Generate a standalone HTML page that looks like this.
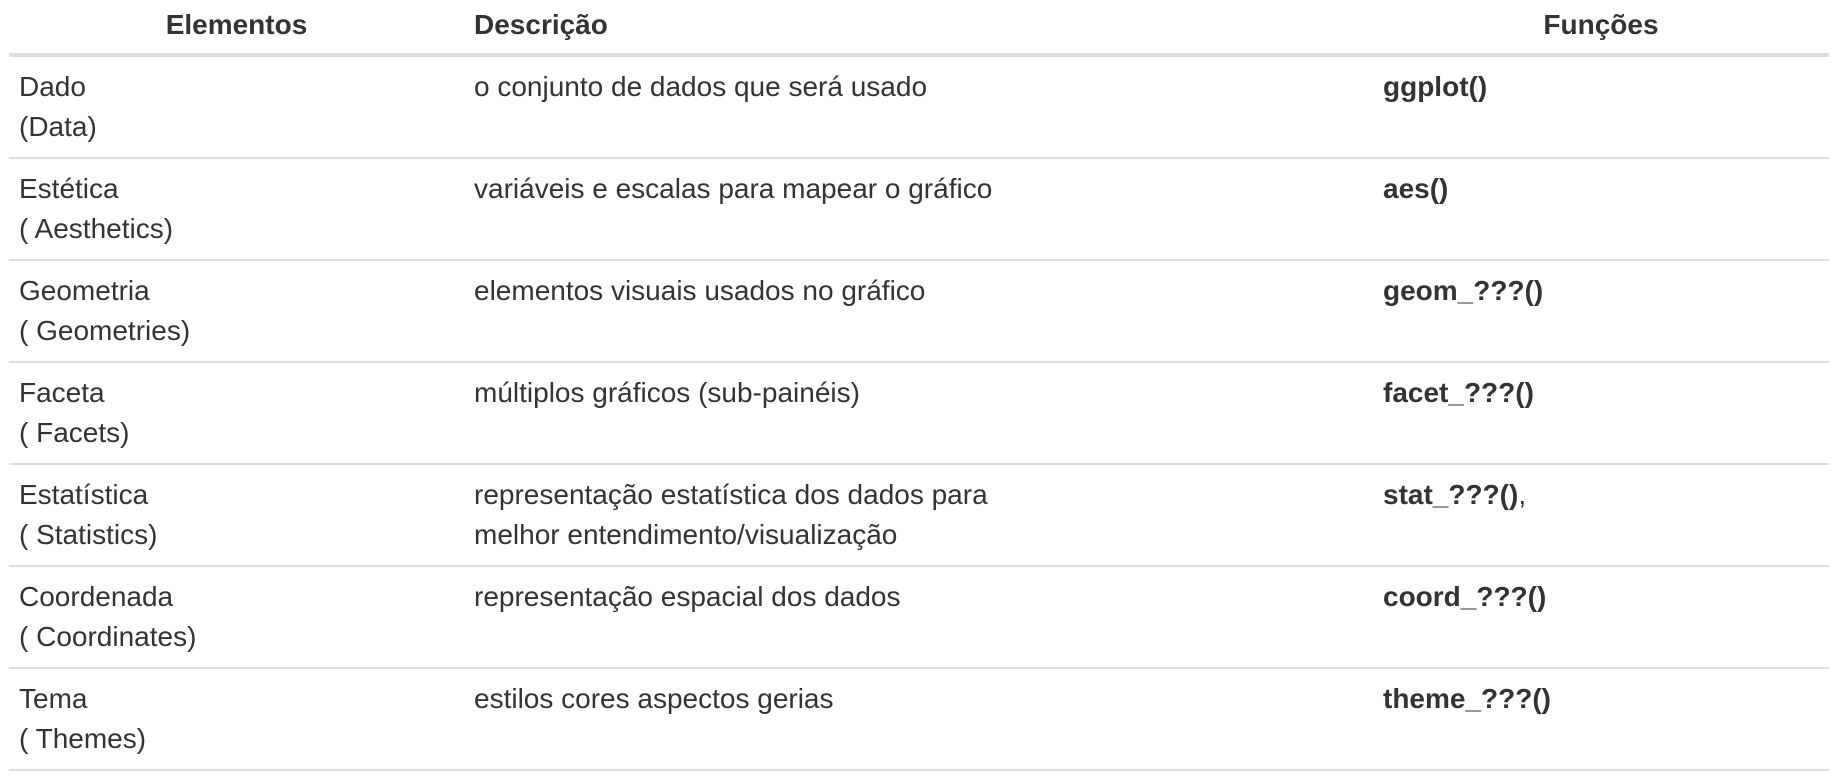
<!DOCTYPE html>
<html><head><meta charset="utf-8"><style>
html,body{margin:0;padding:0;background:#fff;width:1838px;height:781px;overflow:hidden}
table{position:absolute;left:9px;top:0;width:1820px;border-collapse:collapse;font-family:"Liberation Sans",Arial,sans-serif;font-size:28px;color:#333;line-height:40px}
th{font-weight:bold;height:35px;padding:5px 10px 8px;border-bottom:4px solid #ddd;text-align:left}
td{padding:10px 10px;border-bottom:2px solid #ddd;vertical-align:top;height:80px}
.c1{width:435px}.c2{width:889px}
th.c1,th.c3{text-align:center}
b{font-weight:bold}
</style></head><body>
<table>
<tr><th class="c1">Elementos</th><th class="c2">Descrição</th><th class="c3">Funções</th></tr>
<tr><td>Dado<br>(Data)</td><td>o conjunto de dados que será usado</td><td><b>ggplot()</b></td></tr>
<tr><td>Estética<br>( Aesthetics)</td><td>variáveis e escalas para mapear o gráfico</td><td><b>aes()</b></td></tr>
<tr><td>Geometria<br>( Geometries)</td><td>elementos visuais usados no gráfico</td><td><b>geom_???()</b></td></tr>
<tr><td>Faceta<br>( Facets)</td><td>múltiplos gráficos (sub-painéis)</td><td><b>facet_???()</b></td></tr>
<tr><td>Estatística<br>( Statistics)</td><td>representação estatística dos dados para<br>melhor entendimento/visualização</td><td><b>stat_???()</b>,</td></tr>
<tr><td>Coordenada<br>( Coordinates)</td><td>representação espacial dos dados</td><td><b>coord_???()</b></td></tr>
<tr><td>Tema<br>( Themes)</td><td>estilos cores aspectos gerias</td><td><b>theme_???()</b></td></tr>
</table>
</body></html>
